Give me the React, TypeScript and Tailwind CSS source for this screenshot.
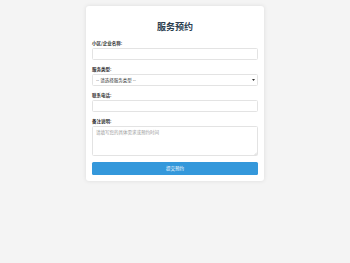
import { useState } from "react";

const fieldClass =
  "block w-full h-[12px] rounded-[1.5px] border border-[#e3e3e3] bg-white px-[3px] text-[4.5px] text-[#333] outline-none";

export default function App() {
  const [name, setName] = useState("");
  const [type, setType] = useState("");
  const [phone, setPhone] = useState("");
  const [note, setNote] = useState("");

  return (
    <div
      className="min-h-[263px] w-full bg-[#f4f4f4] pt-[6px]"
      style={{ fontFamily: '"Noto Sans CJK SC", "Noto Sans", sans-serif' }}
    >
      <div className="mx-auto w-[178px] rounded-[3px] bg-white px-[6px] pt-[15px] pb-[6px] shadow-[0_0_4px_rgba(0,0,0,0.1)]">
        <h1 className="mb-[8px] text-center text-[9px] leading-[11px] font-bold text-[#2c3e50]">
          服务预约
        </h1>

        <form onSubmit={(e) => e.preventDefault()}>
          <div className="mb-[6px]">
            <label className="mb-[2px] block text-[4.5px] leading-[6px] font-bold text-[#333]">
              小区/企业名称:
            </label>
            <input
              className={fieldClass}
              value={name}
              onChange={(e) => setName(e.target.value)}
            />
          </div>

          <div className="mb-[6px]">
            <label className="mb-[2px] block text-[4.5px] leading-[6px] font-bold text-[#333]">
              服务类型:
            </label>
            <div className="relative">
              <select
                className={fieldClass + " appearance-none px-[2px]"}
                value={type}
                onChange={(e) => setType(e.target.value)}
              >
                <option value="">-- 请选择服务类型 --</option>
                <option value="clean">保洁服务</option>
                <option value="repair">维修服务</option>
              </select>
              {/* small dropdown caret */}
              <svg
                className="pointer-events-none absolute top-[5px] right-[3px]"
                width="3"
                height="2"
                viewBox="0 0 6 4"
              >
                <path d="M0 0 L6 0 L3 4 Z" fill="#333" />
              </svg>
            </div>
          </div>

          <div className="mb-[6px]">
            <label className="mb-[2px] block text-[4.5px] leading-[6px] font-bold text-[#333]">
              联系电话:
            </label>
            <input
              className={fieldClass}
              value={phone}
              onChange={(e) => setPhone(e.target.value)}
            />
          </div>

          <div className="mb-[6px]">
            <label className="mb-[2px] block text-[4.5px] leading-[6px] font-bold text-[#333]">
              备注说明:
            </label>
            <div className="relative">
              <textarea
                className="block h-[30px] w-full resize-none rounded-[1.5px] border border-[#e3e3e3] bg-white px-[3px] py-[2px] text-[4.5px] leading-[6px] text-[#333] outline-none placeholder:text-[#999]"
                placeholder="请填写您的具体需求或预约时间"
                value={note}
                onChange={(e) => setNote(e.target.value)}
              />
              {/* tiny resize grip */}
              <svg
                className="pointer-events-none absolute right-[1px] bottom-[1px]"
                width="3"
                height="3"
                viewBox="0 0 6 6"
              >
                <path d="M1 6 L6 1 M3.5 6 L6 3.5" stroke="#aaa" strokeWidth="0.8" />
              </svg>
            </div>
          </div>

          <button
            type="submit"
            className="block h-[13px] w-full rounded-[1.5px] bg-[#3498db] text-[4.5px] text-white"
          >
            提交预约
          </button>
        </form>
      </div>
    </div>
  );
}
